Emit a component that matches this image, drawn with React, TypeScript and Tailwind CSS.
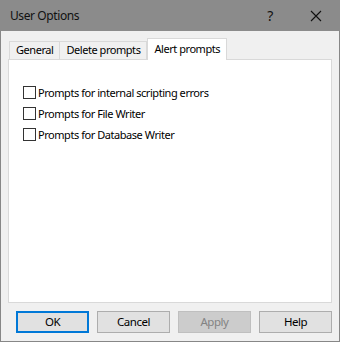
import React from "react";

const tabs = ["General", "Delete prompts", "Alert prompts"];

const options = [
  "Prompts for internal scripting errors",
  "Prompts for File Writer",
  "Prompts for Database Writer",
];

const buttons = [
  { label: "OK", focus: true },
  { label: "Cancel" },
  { label: "Apply", disabled: true },
  { label: "Help" },
];

export default function App() {
  return (
    <div
      className="w-[340px] h-[342px] flex flex-col bg-[#f0f0f0] text-[11px] tracking-[-0.45px] text-black"
      style={{ fontFamily: '"Noto Sans", sans-serif' }}
    >
      {/* title bar */}
      <div className="h-[31px] bg-[#8b8b8b] flex items-center pl-[10px] shrink-0">
        <span className="text-[12px] tracking-[-0.4px] text-[#111]">User Options</span>
        <span className="ml-auto mr-[37px] text-[14px] text-[#111]">?</span>
        <svg width="12" height="12" viewBox="0 0 12 12" className="mr-[18px]">
          <path d="M1 1 L11 11 M11 1 L1 11" stroke="#111" strokeWidth="1.1" />
        </svg>
      </div>

      <div className="flex-1 flex flex-col border-x border-b border-[#878787] px-[7px]">
        {/* tabs */}
        <div className="flex items-end h-[28px] pl-[1px] relative z-10">
          {tabs.map((t, i) =>
            i === 2 ? (
              <div
                key={t}
                className="h-[22px] -mb-[1px] px-[6px] bg-white border border-b-0 border-[#d9d9d9] flex items-center"
              >
                {t}
              </div>
            ) : (
              <div
                key={t}
                className={
                  "h-[18px] px-[6px] bg-[#f0f0f0] border border-b-0 border-[#d9d9d9] flex items-center" +
                  (i > 0 ? " -ml-[1px]" : "")
                }
              >
                {t}
              </div>
            )
          )}
        </div>

        {/* panel */}
        <div className="h-[244px] bg-white border border-[#d9d9d9] pt-[26px] pl-[14px] flex flex-col gap-[8px]">
          {options.map((o) => (
            <label key={o} className="flex items-center h-[13px]">
              <span className="w-[13px] h-[13px] border border-[#333] bg-white shrink-0" />
              <span className="ml-[2px] leading-none">{o}</span>
            </label>
          ))}
        </div>

        {/* buttons */}
        <div className="flex gap-[8px] pl-[8px] pt-[8px]">
          {buttons.map((b) => (
            <div
              key={b.label}
              className={
                "w-[73px] h-[22px] flex items-center justify-center border text-[11.5px] " +
                (b.disabled
                  ? "bg-[#cccccc] border-[#bfbfbf] text-[#838383]"
                  : b.focus
                  ? "bg-[#e1e1e1] border-2 border-[#0078d7]"
                  : "bg-[#e1e1e1] border-[#adadad]")
              }
            >
              {b.label}
            </div>
          ))}
        </div>
      </div>
    </div>
  );
}
